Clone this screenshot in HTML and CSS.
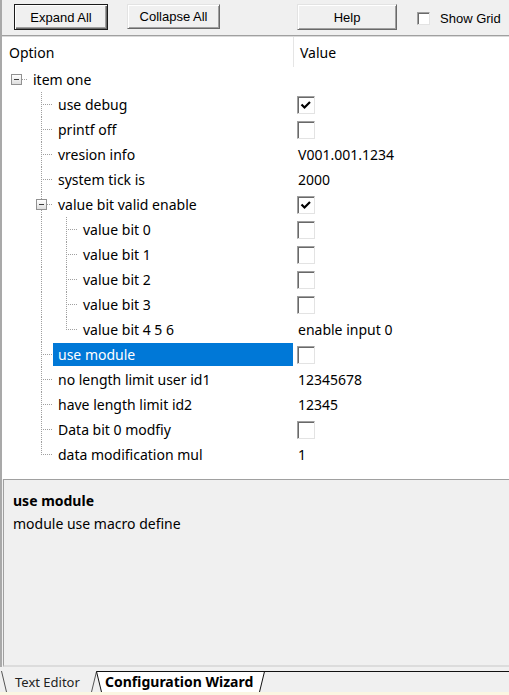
FILE: index.html
```html
<!DOCTYPE html>
<html>
<head>
<meta charset="utf-8">
<link rel="stylesheet" href="styles.css">
</head>
<body>
<div class="win">
  <div class="toolbar">
    <div class="btn btn-default btn-expand">Expand All</div>
    <div class="btn btn-collapse">Collapse All</div>
    <div class="btn btn-help">Help</div>
    <div class="grid"><span class="cb cb-small"></span><span class="grid-text">Show Grid</span></div>
  </div>
  <div class="tree">
    <div class="head"><div class="hname">Option</div><div class="hval">Value</div></div>

    <div class="row"><div class="name"><span class="cell root"><span class="box"></span></span><span class="label">item one</span></div><div class="value"></div></div>

    <div class="row"><div class="name"><span class="cell"></span><span class="cell tee"></span><span class="label">use debug</span></div><div class="value"><span class="cb"><svg class="tick" viewBox="0 0 16 16"><polyline points="3.5,7.5 6.5,10.5 12,5"/></svg></span></div></div>

    <div class="row"><div class="name"><span class="cell"></span><span class="cell tee"></span><span class="label">printf off</span></div><div class="value"><span class="cb"></span></div></div>

    <div class="row"><div class="name"><span class="cell"></span><span class="cell tee"></span><span class="label">vresion info</span></div><div class="value"><span class="vtext">V001.001.1234</span></div></div>

    <div class="row"><div class="name"><span class="cell"></span><span class="cell tee"></span><span class="label">system tick is</span></div><div class="value"><span class="vtext">2000</span></div></div>

    <div class="row"><div class="name"><span class="cell"></span><span class="cell tee tee-box"><span class="box"></span></span><span class="label">value bit valid enable</span></div><div class="value"><span class="cb"><svg class="tick" viewBox="0 0 16 16"><polyline points="3.5,7.5 6.5,10.5 12,5"/></svg></span></div></div>

    <div class="row"><div class="name"><span class="cell"></span><span class="cell pipe"></span><span class="cell tee"></span><span class="label">value bit 0</span></div><div class="value"><span class="cb"></span></div></div>

    <div class="row"><div class="name"><span class="cell"></span><span class="cell pipe"></span><span class="cell tee"></span><span class="label">value bit 1</span></div><div class="value"><span class="cb"></span></div></div>

    <div class="row"><div class="name"><span class="cell"></span><span class="cell pipe"></span><span class="cell tee"></span><span class="label">value bit 2</span></div><div class="value"><span class="cb"></span></div></div>

    <div class="row"><div class="name"><span class="cell"></span><span class="cell pipe"></span><span class="cell tee"></span><span class="label">value bit 3</span></div><div class="value"><span class="cb"></span></div></div>

    <div class="row"><div class="name"><span class="cell"></span><span class="cell pipe"></span><span class="cell end"></span><span class="label">value bit 4 5 6</span></div><div class="value"><span class="vtext">enable input 0</span></div></div>

    <div class="row"><div class="name"><span class="cell"></span><span class="cell tee"></span><span class="label selected">use module</span></div><div class="value"><span class="cb"></span></div></div>

    <div class="row"><div class="name"><span class="cell"></span><span class="cell tee"></span><span class="label">no length limit user id1</span></div><div class="value"><span class="vtext">12345678</span></div></div>

    <div class="row"><div class="name"><span class="cell"></span><span class="cell tee"></span><span class="label">have length limit id2</span></div><div class="value"><span class="vtext">12345</span></div></div>

    <div class="row"><div class="name"><span class="cell"></span><span class="cell tee"></span><span class="label">Data bit 0 modfiy</span></div><div class="value"><span class="cb"></span></div></div>

    <div class="row"><div class="name"><span class="cell"></span><span class="cell end"></span><span class="label">data modification mul</span></div><div class="value"><span class="vtext">1</span></div></div>
  </div>
  <div class="desc">
    <div class="dtitle">use module</div>
    <div class="dtext">module use macro define</div>
  </div>
</div>
<div class="tabs">
  <svg class="tabs-art" width="509" height="25" viewBox="0 0 509 25">
    <polygon points="96.5,4.5 264.5,4.5 259.5,25 101.5,25" fill="#ffffff"/>
    <path d="M1.5 4 L6.5 25" stroke="#555" fill="none"/>
    <path d="M91.5 25 L96.5 4.5" stroke="#555" fill="none"/>
    <path d="M101.5 25 L96.5 4.5 H509" stroke="#111" fill="none"/>
    <path d="M264.5 4.5 L259.5 25" stroke="#111" fill="none"/>
  </svg>
  <span class="tab tab-inactive">Text Editor</span>
  <span class="tab tab-active">Configuration Wizard</span>
</div>
<div class="status"></div>
</body>
</html>
```

FILE: styles.css
```css
* { box-sizing: border-box; }
html, body { margin: 0; padding: 0; }
body {
  width: 509px;
  height: 695px;
  overflow: hidden;
  background: #f0f0f0;
  font-family: "Noto Sans", "DejaVu Sans", sans-serif;
  font-size: 14px;
  color: #000;
}
.win {
  border-left: 2px solid #a9a9a9;
}
.toolbar {
  height: 36px;
  display: flex;
  align-items: flex-start;
  padding-top: 4px;
  border-bottom: 1px solid #a0a0a0;
  font-family: "Liberation Sans", Arial, sans-serif;
  font-size: 13px;
}
.btn {
  height: 25px;
  display: flex;
  align-items: center;
  justify-content: center;
  background: #f0f0f0;
  border: 1px solid;
  border-color: #e3e3e3 #696969 #696969 #e3e3e3;
  box-shadow: inset 1px 1px 0 #ffffff, inset -1px -1px 0 #a0a0a0;
}
.btn-default {
  border-color: #1a1a1a;
  box-shadow: inset 1px 1px 0 #ffffff, inset -1px -1px 0 #696969, inset -2px -2px 0 #a0a0a0;
}
.btn-expand { width: 94px; margin-left: 12px; height: 26px; }
.btn-collapse { width: 93px; margin-left: 19px; }
.btn-help { width: 100px; margin-left: 77px; height: 26px; }
.grid {
  display: flex;
  align-items: center;
  height: 25px;
  margin-left: 20px;
  margin-top: 2px;
}
.grid-text { margin-left: 10px; }

.cb {
  width: 18px;
  height: 18px;
  display: inline-flex;
  flex: none;
  background: #fff;
  border: 1px solid;
  border-color: #a0a0a0 #e3e3e3 #e3e3e3 #a0a0a0;
  box-shadow: inset 1px 1px 0 #696969;
}
.cb-small { width: 13px; height: 13px; }
.tick { width: 16px; height: 16px; }
.tick polyline { fill: none; stroke: #000; stroke-width: 2.2; }

.tree {
  height: 443px;
  background: #fff;
  border-top: 1px solid #dadada;
  padding-left: 1px;
}
.head {
  display: flex;
  height: 30px;
  align-items: stretch;
}
.hname {
  width: 290px;
  padding-left: 6px;
  line-height: 31px;
}
.hval {
  border-left: 1px solid #e5e5e5;
  padding-left: 6px;
  line-height: 31px;
}
.row {
  display: flex;
  height: 25px;
}
.name {
  width: 290px;
  flex: none;
  display: flex;
}
.value {
  flex: 1;
  display: flex;
  align-items: center;
  padding-left: 4px;
}
.vtext { margin-left: 1px; line-height: 25px; white-space: nowrap; }
.cell {
  width: 25px;
  height: 25px;
  flex: none;
  display: flex;
  align-items: center;
  background-repeat: no-repeat;
}
.pipe {
  background-image: repeating-linear-gradient(to bottom, #a0a0a0 0 1px, transparent 1px 2px);
  background-size: 1px 25px;
  background-position: 13px 0;
}
.tee {
  background-image:
    repeating-linear-gradient(to bottom, #a0a0a0 0 1px, transparent 1px 2px),
    repeating-linear-gradient(to right, #a0a0a0 0 1px, transparent 1px 2px);
  background-size: 1px 25px, 12px 1px;
  background-position: 13px 0, 13px 12px;
}
.end {
  background-image:
    repeating-linear-gradient(to bottom, #a0a0a0 0 1px, transparent 1px 2px),
    repeating-linear-gradient(to right, #a0a0a0 0 1px, transparent 1px 2px);
  background-size: 1px 13px, 12px 1px;
  background-position: 13px 0, 13px 12px;
}
.root {
  background-image: repeating-linear-gradient(to right, #a0a0a0 0 1px, transparent 1px 2px);
  background-size: 6px 1px;
  background-position: 19px 12px;
}
.box {
  width: 11px;
  height: 11px;
  margin-left: 8px;
  margin-top: -1px;
  border: 1px solid #919191;
  background:
    linear-gradient(#3c3c3c, #3c3c3c) center / 5px 1px no-repeat,
    linear-gradient(#ffffff, #dedede);
}
.label {
  flex: 1;
  padding-left: 5px;
  line-height: 25px;
  white-space: nowrap;
}
.label.selected {
  background: #0078d7;
  color: #fff;
  margin: 1px 0;
  line-height: 23px;
}

.desc {
  height: 188px;
  margin-left: 1px;
  border-left: 1px solid #a0a0a0;
  border-top: 1px solid #a0a0a0;
  border-bottom: 2px solid #dcdcdc;
  padding: 9px 0 0 9px;
  line-height: 23px;
}
.dtitle { font-weight: bold; }

.tabs {
  position: relative;
  height: 25px;
  display: flex;
  font-size: 13px;
  line-height: 20px;
  padding-top: 5px;
}
.tabs-art { position: absolute; left: 0; top: 0; }
.tab { position: relative; white-space: nowrap; }
.tab-inactive { width: 105px; padding-left: 15px; color: #222; }
.tab-active { font-weight: bold; font-size: 14px; }
.status {
  height: 3px;
  background: #fbf6e2;
}
```
